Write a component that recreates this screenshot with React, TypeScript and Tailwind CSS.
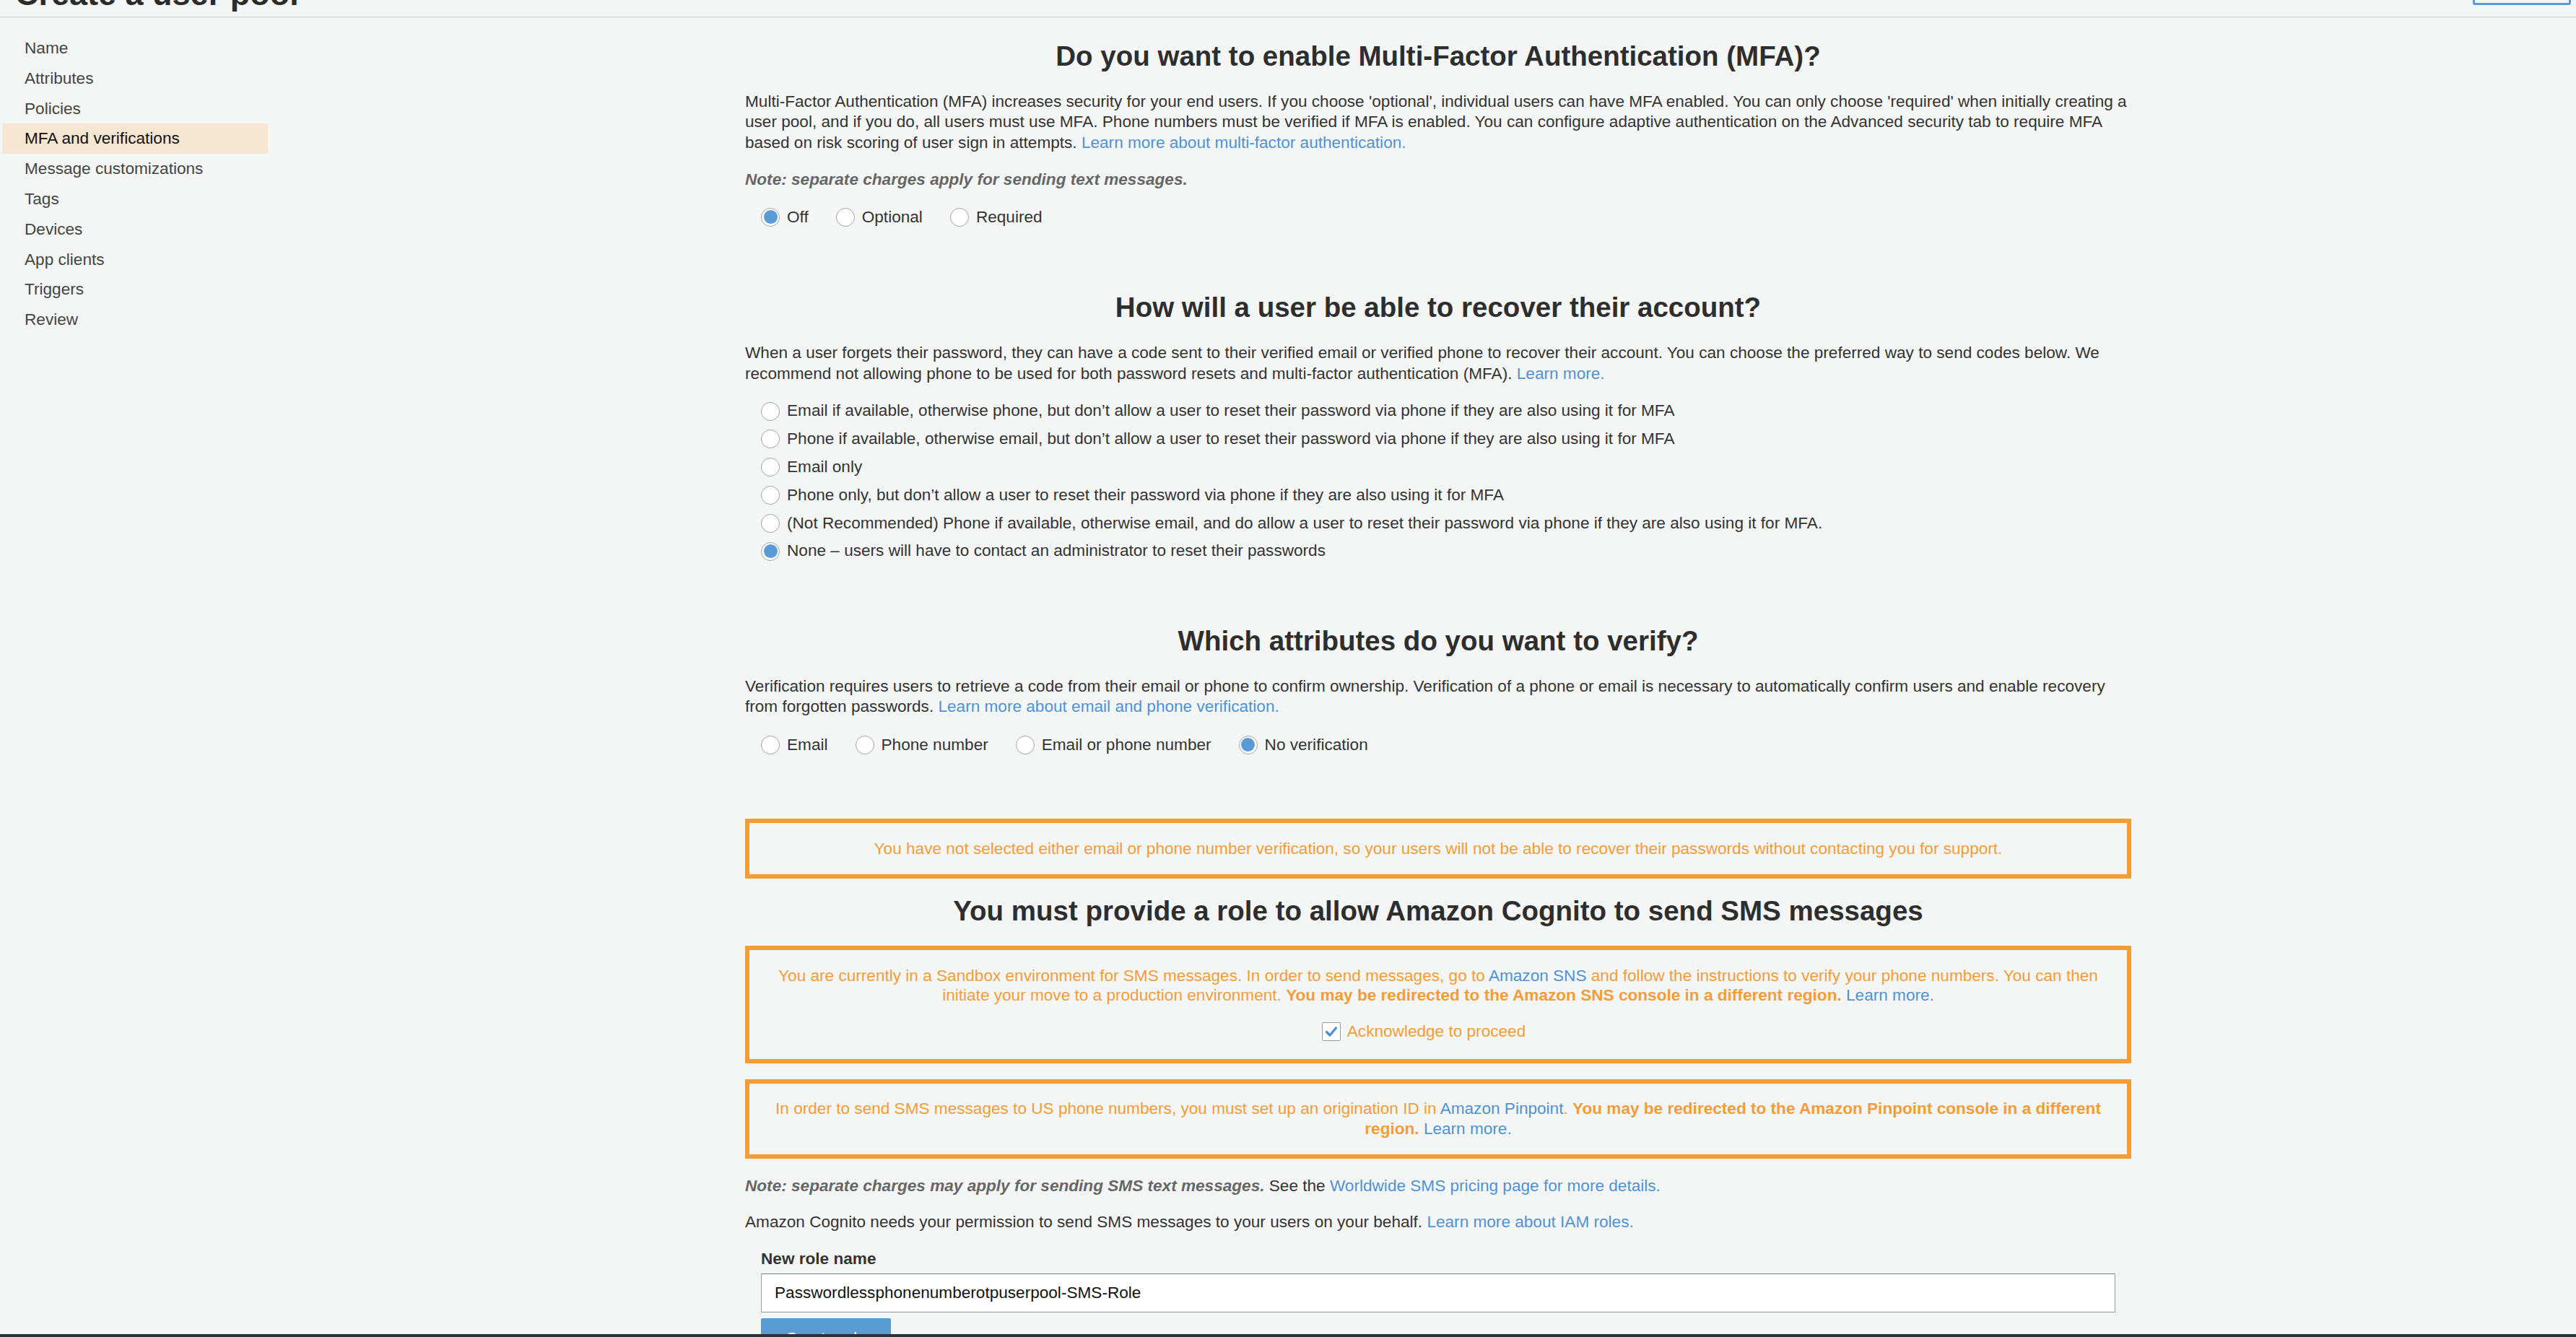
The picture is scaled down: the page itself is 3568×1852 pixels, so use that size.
import React from 'react';

const navItems = ['Name', 'Attributes', 'Policies', 'MFA and verifications', 'Message customizations', 'Tags', 'Devices', 'App clients', 'Triggers', 'Review'];

const recoveryOptions = [
    'Email if available, otherwise phone, but don’t allow a user to reset their password via phone if they are also using it for MFA',
    'Phone if available, otherwise email, but don’t allow a user to reset their password via phone if they are also using it for MFA',
    'Email only',
    'Phone only, but don’t allow a user to reset their password via phone if they are also using it for MFA',
    '(Not Recommended) Phone if available, otherwise email, and do allow a user to reset their password via phone if they are also using it for MFA.',
    'None – users will have to contact an administrator to reset their passwords',
];

function Radio({ checked = false }: { checked?: boolean }) {
    return (
        <span className="w-[26px] h-[26px] rounded-full border border-[#a3a3a3] bg-white flex items-center justify-center shrink-0">
            {checked && <span className="w-[19px] h-[19px] rounded-full bg-[#5a9bd5]" />}
        </span>
    );
}

function RadioItem({ label, checked = false }: { label: string; checked?: boolean }) {
    return (
        <label className="flex items-center">
            <Radio checked={checked} />
            <span className="ml-[10px] whitespace-nowrap">{label}</span>
        </label>
    );
}

function Link({ children }: { children: React.ReactNode }) {
    return <a className="text-[#4f92d3] cursor-pointer">{children}</a>;
}

function Heading({ children, className = '' }: { children: React.ReactNode; className?: string }) {
    return <h2 className={`text-center font-bold text-[38.5px] leading-[46px] text-[#2e2e2e] ${className}`}>{children}</h2>;
}

export default function App() {
    return (
        <div className="h-screen overflow-hidden bg-[#f4f6f5] text-[#333333] font-['Liberation_Sans',Arial,sans-serif]">

            {/* Page header, scrolled mostly out of view */}
            <header className="h-[24px] border-b border-[#c9cbca] flex items-start justify-between">
                <h1 className="ml-[21px] mt-[-31px] text-[45px] leading-[45px] font-bold text-[#2b2b2b]">Create a user pool</h1>
                <div className="mr-[7px] mt-[-33px] w-[136px] h-[40px] border-[3px] border-[#5a9bd5] rounded-[3px]" />
            </header>

            <div className="flex">

                {/* Wizard steps */}
                <nav className="w-[371px] pt-[22px] pl-[3px] shrink-0">
                    {navItems.map((item) => (
                        <div
                            key={item}
                            className={
                                item === 'MFA and verifications'
                                    ? 'h-[41.8px] flex items-center pl-[31px] text-[22.6px] bg-[#f6e6d2] text-[#111111]'
                                    : 'h-[41.8px] flex items-center pl-[31px] text-[22.6px] text-[#444444]'
                            }
                        >
                            {item}
                        </div>
                    ))}
                </nav>

                <main className="ml-[661px] w-[1920px] shrink-0 text-[22.6px] leading-[28.5px]">

                    {/* MFA */}
                    <Heading className="mt-[30.5px]">Do you want to enable Multi-Factor Authentication (MFA)?</Heading>
                    <p className="mt-[26px] whitespace-nowrap">
                        Multi-Factor Authentication (MFA) increases security for your end users. If you choose 'optional', individual users can have MFA enabled. You can only choose 'required' when initially creating a<br />
                        user pool, and if you do, all users must use MFA. Phone numbers must be verified if MFA is enabled. You can configure adaptive authentication on the Advanced security tab to require MFA<br />
                        based on risk scoring of user sign in attempts. <Link>Learn more about multi-factor authentication.</Link>
                    </p>
                    <p className="mt-[22.5px] font-bold italic text-[#666666]">Note: separate charges apply for sending text messages.</p>
                    <div className="mt-[18.5px] h-[38.8px] pl-[22px] flex items-center gap-x-[38px]">
                        <RadioItem label="Off" checked />
                        <RadioItem label="Optional" />
                        <RadioItem label="Required" />
                    </div>

                    {/* Account recovery */}
                    <Heading className="mt-[83px]">How will a user be able to recover their account?</Heading>
                    <p className="mt-[26px] whitespace-nowrap">
                        When a user forgets their password, they can have a code sent to their verified email or verified phone to recover their account. You can choose the preferred way to send codes below. We<br />
                        recommend not allowing phone to be used for both password resets and multi-factor authentication (MFA). <Link>Learn more.</Link>
                    </p>
                    <div className="mt-[18px] pl-[22px]">
                        {recoveryOptions.map((opt, i) => (
                            <div key={opt} className="h-[38.8px] flex items-center">
                                <RadioItem label={opt} checked={i === recoveryOptions.length - 1} />
                            </div>
                        ))}
                    </div>

                    {/* Verification */}
                    <Heading className="mt-[81.5px]">Which attributes do you want to verify?</Heading>
                    <p className="mt-[26px] whitespace-nowrap">
                        Verification requires users to retrieve a code from their email or phone to confirm ownership. Verification of a phone or email is necessary to automatically confirm users and enable recovery<br />
                        from forgotten passwords. <Link>Learn more about email and phone verification.</Link>
                    </p>
                    <div className="mt-[19px] h-[38.8px] pl-[22px] flex items-center gap-x-[38px]">
                        <RadioItem label="Email" />
                        <RadioItem label="Phone number" />
                        <RadioItem label="Email or phone number" />
                        <RadioItem label="No verification" checked />
                    </div>

                    <div className="mt-[82.6px] border-[6px] border-[#f49d37] pt-[22px] pb-[20.5px] px-[20px] text-center text-[#f39c38] whitespace-nowrap">
                        You have not selected either email or phone number verification, so your users will not be able to recover their passwords without contacting you for support.
                    </div>

                    {/* SMS role */}
                    <Heading className="mt-[21.8px]">You must provide a role to allow Amazon Cognito to send SMS messages</Heading>

                    <div className="mt-[25.2px] border-[6px] border-[#f49d37] pt-[22px] pb-[24px] px-[20px] text-center text-[#f39c38] leading-[27.5px]">
                        <p className="whitespace-nowrap">
                            You are currently in a Sandbox environment for SMS messages. In order to send messages, go to <Link>Amazon SNS</Link> and follow the instructions to verify your phone numbers. You can then<br />
                            initiate your move to a production environment. <strong>You may be redirected to the Amazon SNS console in a different region.</strong> <Link>Learn more.</Link>
                        </p>
                        <div className="mt-[22px] h-[28.5px] flex items-center justify-center pr-[40px]">
                            <span className="w-[26px] h-[26px] border border-[#9a9a9a] rounded-[2px] bg-white flex items-center justify-center">
                                <svg width="20" height="20" viewBox="0 0 20 20" fill="none">
                                    <path d="M3.5 10.5 L8 15 L16.5 5" stroke="#4a8fd6" strokeWidth="3.2" strokeLinecap="round" strokeLinejoin="round" />
                                </svg>
                            </span>
                            <span className="ml-[9px]">Acknowledge to proceed</span>
                        </div>
                    </div>

                    <div className="mt-[22px] border-[6px] border-[#f49d37] pt-[21px] pb-[21.5px] px-[20px] text-center text-[#f39c38] leading-[27.5px] whitespace-nowrap">
                        In order to send SMS messages to US phone numbers, you must set up an origination ID in <Link>Amazon Pinpoint</Link>. <strong>You may be redirected to the Amazon Pinpoint console in a different</strong><br />
                        <strong>region.</strong> <Link>Learn more.</Link>
                    </div>

                    <p className="mt-[24px]">
                        <span className="font-bold italic text-[#666666]">Note: separate charges may apply for sending SMS text messages.</span> See the <Link>Worldwide SMS pricing page for more details.</Link>
                    </p>
                    <p className="mt-[21.5px]">
                        Amazon Cognito needs your permission to send SMS messages to your users on your behalf. <Link>Learn more about IAM roles.</Link>
                    </p>

                    <div className="px-[22px]">
                        <div className="mt-[22.7px] font-bold text-[#333333]">New role name</div>
                        <input
                            readOnly
                            value="Passwordlessphonenumberotpuserpool-SMS-Role"
                            className="mt-[5.5px] block w-full h-[54px] bg-white border border-[#9a9a9a] border-t-[#7f7f7f] px-[18px] text-[22.6px] text-[#111111] outline-none"
                        />
                        <button className="mt-[8px] w-[180px] h-[56px] bg-[#5a9bd5] text-white rounded-[2px] text-[22.6px]">Create role</button>
                    </div>
                </main>
            </div>

            {/* Console footer bar */}
            <div className="fixed left-0 right-0 bottom-0 h-[4px] bg-[#2e3238]" />
        </div>
    );
}
